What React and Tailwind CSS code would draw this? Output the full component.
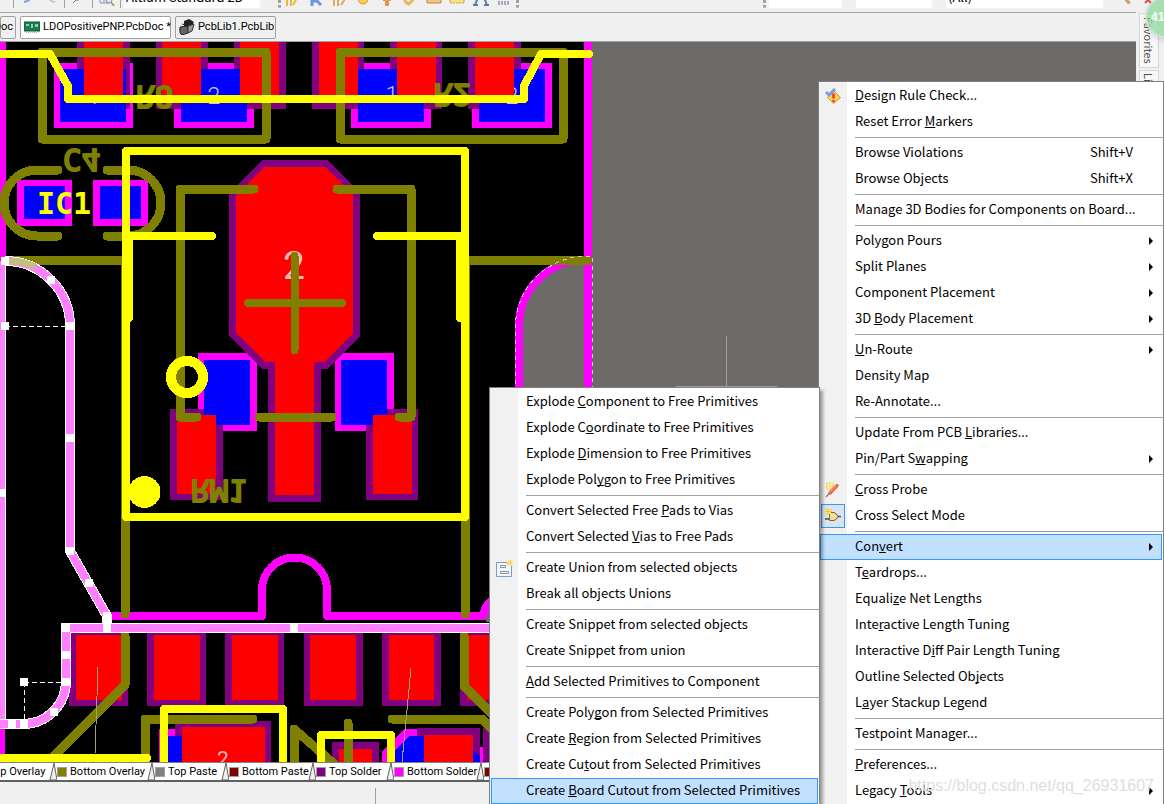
import { useState } from "react";

const mainMenu = [
  { label: "&Design Rule Check...", icon: "rule" },
  { label: "Reset Error &Markers" },
  null,
  { label: "Browse Violations", shortcut: "Shift+V" },
  { label: "Browse Objects", shortcut: "Shift+X" },
  null,
  { label: "Manage 3D Bodies for Components on Board..." },
  null,
  { label: "Polygon Pours", submenu: true },
  { label: "Split Planes", submenu: true },
  { label: "Component Placement", submenu: true },
  { label: "3D &Body Placement", submenu: true },
  null,
  { label: "&Un-Route", submenu: true },
  { label: "Density Map" },
  { label: "Re-Annotate..." },
  null,
  { label: "Update From PCB &Libraries..." },
  { label: "Pin/Part S&wapping", submenu: true },
  null,
  { label: "&Cross Probe", icon: "probe" },
  { label: "Cross Select Mode", icon: "select", checked: true },
  null,
  { label: "Con&vert", submenu: true },
  { label: "T&eardrops..." },
  { label: "Equali&ze Net Lengths" },
  { label: "Inte&ractive Length Tuning" },
  { label: "Interactive D&iff Pair Length Tuning" },
  { label: "Outline Selected Ob&jects" },
  { label: "L&ayer Stackup Legend" },
  null,
  { label: "Testpoint Manager..." },
  null,
  { label: "&Preferences..." },
  { label: "Legacy &Tools", submenu: true },
];

const convertMenu = [
  { label: "Explode &Component to Free Primitives" },
  { label: "Explode C&oordinate to Free Primitives" },
  { label: "Explode &Dimension to Free Primitives" },
  { label: "Explode Pol&ygon to Free Primitives" },
  null,
  { label: "Convert Selected Free &Pads to Vias" },
  { label: "Convert Selected &Vias to Free Pads" },
  null,
  { label: "Create Union from selected objects", icon: "union" },
  { label: "Break all objects Unions" },
  null,
  { label: "Create Snippet from selected objects" },
  { label: "Create Snippet from union" },
  null,
  { label: "&Add Selected Primitives to Component" },
  null,
  { label: "Create Poly&gon from Selected Primitives" },
  { label: "Create &Region from Selected Primitives" },
  { label: "Create Cu&tout from Selected Primitives" },
  { label: "Create &Board Cutout from Selected Primitives" },
];

const layers = [
  { name: "Top Overlay", color: "bg-[#ffff00]", width: "w-[82px]" },
  { name: "Bottom Overlay", color: "bg-[#808000]", width: "w-[98px]" },
  { name: "Top Paste", color: "bg-[#808080]", width: "w-[74px]" },
  { name: "Bottom Paste", color: "bg-[#800000]", width: "w-[87px]" },
  { name: "Top Solder", color: "bg-[#800080]", width: "w-[78px]" },
  { name: "Bottom Solder", color: "bg-[#ff00ff]", width: "w-[90px]" },
  { name: "Drill Guide", color: "bg-[#800000]", width: "w-[90px]" },
];

function MenuIcon({ name }) {
  if (name === "rule") {
    return (
      <svg className="h-4 w-4" viewBox="0 0 16 16">
        <path d="M8.500 2.500 15.500 9.500l-7 6-6-6z" fill="#fbd24a" stroke="#c89a3a" />
        <path d="M1 4l3 3 6-6" fill="none" stroke="#7f9be0" strokeWidth="3" />
        <path d="M8.500 5.500v5" stroke="#e03c28" strokeWidth="2.500" />
        <circle cx="8.500" cy="13" r="1.300" fill="#e03c28" />
      </svg>
    );
  }
  if (name === "probe") {
    return (
      <svg className="h-4 w-4" viewBox="0 0 16 16">
        <path d="M1.500 1h7v6h-7zM5 0v8M1 4h8" fill="#fdf0a0" stroke="#f3d56a" strokeDasharray="2 1" />
        <path d="M1 15l3.500-4" stroke="#888" strokeWidth="1.500" />
        <path d="M5 11l7-7.500" stroke="#ec6a48" strokeWidth="3.500" strokeLinecap="round" />
        <path d="M5.500 9.500l6-6.500" stroke="#fba98c" />
      </svg>
    );
  }
  if (name === "select") {
    return (
      <svg className="h-4 w-4" viewBox="0 0 16 16">
        <path d="M0 11h5M12 8.500h4" stroke="#4a4a3a" strokeWidth="1.500" />
        <path d="M4.500 4.500H9q3 1 4 4-1 3-4 4H4.500z" fill="#f7dc98" stroke="#7a6a3a" />
        <path d="M1 1h5v5H1z" fill="#ffe566" />
        <path d="M0 1h1M3 0v7M6 1h1M0 3.500h7M0 6h1" stroke="#f0c53a" />
      </svg>
    );
  }
  return (
    <svg className="h-[18px] w-[18px]" viewBox="0 0 18 18">
      <path d="M1.500 3.500h15v14h-15z" fill="#f2f6fc" stroke="#7d9bd0" />
      <path d="M5.500 6.500h5v2h-5zM5.500 12.500h8v2h-8z" fill="#fff" stroke="#8a8f9c" />
      <path d="M12 1h6v6h-6z" fill="#fbe9a8" />
      <path d="M15 1v6M12 4h6" stroke="#f0c53a" strokeDasharray="2 1" />
    </svg>
  );
}

function Mnemonic({ text }) {
  const at = text.indexOf("&");
  if (at < 0) return <span className="pb-0.5">{text}</span>;
  return (
    <span className="pb-0.5">
      {text.slice(0, at)}
      <u className="underline-offset-1 [text-decoration-skip-ink:none]">{text[at + 1]}</u>
      {text.slice(at + 2)}
    </span>
  );
}

function Menu({ items, active, onHover, className }) {
  return (
    <ul
      role="menu"
      className={`border border-[#808080] bg-white bg-linear-to-r from-[#f1f1f1] from-[28px] to-white to-[28px] pt-px text-[13px] leading-6 text-black ${className}`}
    >
      {items.map((item, i) =>
        item ? (
          <li key={item.label} role="none" className="px-px">
            <button
              role="menuitem"
              onMouseEnter={() => onHover(item.label)}
              className={`flex h-[26px] w-full items-center border whitespace-nowrap ${
                active === item.label ? "border-[#3399ff] bg-[#c2e0ff]" : "border-transparent"
              }`}
            >
              <span className="flex w-[34px] shrink-0">
                {item.icon && (
                  <span
                    className={`flex h-6 w-6 items-center justify-center border ${
                      item.checked ? "border-[#3399ff] bg-[#dae4ee]" : "border-transparent"
                    }`}
                  >
                    <MenuIcon name={item.icon} />
                  </span>
                )}
              </span>
              <Mnemonic text={item.label} />
              {item.shortcut && <span className="mr-7 ml-auto pb-0.5">{item.shortcut}</span>}
              {item.submenu && (
                <svg className="mr-2 ml-auto h-2 w-1" viewBox="0 0 4 8">
                  <path d="M0 0l4 4-4 4z" />
                </svg>
              )}
            </button>
          </li>
        ) : (
          <li key={i} role="separator" className="flex h-[5px] items-center pl-9">
            <span className="h-px w-full bg-[#a0a0a0]" />
          </li>
        )
      )}
    </ul>
  );
}

// x, y, right, bottom
function Box({ at, fill }) {
  return <rect x={at[0]} y={at[1]} width={at[2] - at[0]} height={at[3] - at[1]} fill={fill} />;
}

const solderTop = [
  [77, 42, 130, 109], [156, 42, 208, 109], [234, 42, 286, 109],
  [312, 42, 364, 109], [390, 42, 442, 109], [468, 42, 521, 109],
  [170, 409, 223, 500], [366, 409, 418, 500],
  [69, 632, 128, 706], [147, 632, 206, 706], [225, 632, 284, 706],
  [304, 632, 363, 706], [382, 632, 441, 706], [460, 632, 519, 706],
  [175, 721, 271, 762], [332, 742, 379, 762], [417, 728, 480, 762], [483, 728, 540, 762],
];

const copperTop = [
  [84, 42, 123, 102], [162, 42, 201, 102], [240, 42, 279, 102],
  [319, 42, 358, 102], [397, 42, 436, 102], [475, 42, 514, 102],
  [177, 415, 216, 494], [373, 415, 412, 494],
  [76, 635, 122, 700], [154, 635, 200, 700], [232, 635, 278, 700],
  [310, 635, 356, 700], [389, 635, 434, 700], [467, 635, 513, 700],
  [182, 727, 265, 762], [339, 749, 372, 762], [424, 735, 473, 762],
];

const solderBottom = [
  [54, 63, 133, 128], [174, 63, 254, 128], [351, 63, 431, 128], [472, 63, 552, 128],
  [17, 180, 72, 226], [93, 180, 148, 226],
  [198, 353, 257, 431], [335, 353, 394, 431],
  [159, 729, 180, 762], [478, 747, 483, 762],
];

const copperBottom = [
  [60, 69, 126, 122], [181, 69, 247, 122], [358, 69, 424, 122], [479, 69, 545, 122],
  [24, 186, 65, 219], [100, 186, 141, 219],
  [204, 360, 250, 425], [341, 360, 387, 425],
  [168, 736, 182, 762],
];

const handles = [
  [5, 261], [51, 280], [70, 326], [5, 326], [70, 438], [70, 551], [89, 583],
  [107, 616], [107, 622], [107, 628], [66, 628], [66, 655], [66, 682], [24, 682],
  [54, 712], [24, 724], [12, 724], [1, 493], [294, 628],
];

function Board() {
  return (
    <svg
      className="block h-full w-[1136px]"
      viewBox="0 42 1136 720"
      preserveAspectRatio="xMinYMin slice"
      shapeRendering="crispEdges"
      fill="none"
    >
      <path d="M0 42h588v720H0z" fill="#000" />
      <path d="M519 400v-74a66 66 0 0 1 66-66h3v140z" fill="#6e6a69" />

      {/* Board outline and bottom solder */}
      <g stroke="#f0f" strokeWidth="8" strokeLinecap="round" strokeLinejoin="round">
        <path d="M588 42v358M519 400v-74a66 66 0 0 1 66-66" />
        <path d="M2 42v220M1 720v42" />
        <path d="M107 616h155v-26a32.500 32.500 0 0 1 65 0v26h160" />
      </g>
      <path d="M478 620q1-15 14-26v26z" fill="#f0f" />
      <path d="M486 622v-6l6-4v10z" fill="#6e6a69" />
      {solderBottom.map((at, i) => <Box key={i} at={at} fill="#f0f" />)}
      <path d="M382 762v-10l22-23h14v33z" fill="#f0f" />

      {solderTop.map((at, i) => <Box key={i} at={at} fill="#800080" />)}
      <path d="M262 160h65l33 33v143l-33 33h-6v133h-53V369h-6l-33-33V193z" fill="#800080" />

      {copperBottom.map((at, i) => <Box key={i} at={at} fill="#00f" />)}
      <path d="M395 762v-12l15-14h15v26zM473 762v-12l7 7v5z" fill="#00f" />
      <g fontFamily="Roboto, sans-serif" fontWeight="300" textAnchor="middle" fill="#c8c8ff">
        <text x="94" y="104" fontSize="23">1</text>
        <text x="214" y="104" fontSize="23">2</text>
        <text x="392" y="103" fontSize="23">1</text>
        <text x="512" y="104" fontSize="23">2</text>
      </g>

      {copperTop.map((at, i) => <Box key={i} at={at} fill="#f00" />)}
      <path d="M265 167h60l28 28v138l-29 29h-10v133h-39V362h-10l-29-29V195z" fill="#f00" />
      <g fontFamily="Roboto, sans-serif" textAnchor="middle" fill="#ffb8b8">
        <text x="294" y="279" fontSize="39">2</text>
        <text x="223" y="766" fontSize="21">2</text>
      </g>

      {/* Bottom overlay */}
      <g stroke="#808000" strokeWidth="9" strokeLinecap="round" strokeLinejoin="round">
        <path d="M42 52h224v87H42zM340 52h223v87H340z" />
        <path d="M58 170H37a33 33 0 0 0 0 66h21M107 170h21a33 33 0 0 1 0 66h-21" />
        <path d="M5 260.500h120V614M588 260.500H465V614" />
        <path d="M254 189h-74v228h17M337 189h74v228h-12M259 417h73" />
        <path d="M125 636v49l-75 75M464 636v50l30 30M392 719h90l14 14" />
        <path d="M145 765v-46h108M294 765v-36l46 40M348 723v45" />
      </g>
      <path d="M294.500 256v94M248 303h94" stroke="#808000" strokeWidth="8" strokeLinecap="round" />
      <g
        fill="#808000"
        stroke="#808000"
        strokeWidth="2"
        strokeLinejoin="round"
        fontFamily="'DejaVu Sans Mono', monospace"
        fontSize="31"
      >
        <text transform="matrix(1 0 0 -1 136 86)">R8</text>
        <text transform="matrix(1 0 0 -1 434 84)">R2</text>
        <text transform="matrix(1 0 0 -1 63 149)">C4</text>
        <text transform="matrix(1 0 0 -1 191 480)">RM1</text>
      </g>

      {/* Top overlay */}
      <g stroke="#ff0" strokeWidth="8" strokeLinecap="round" strokeLinejoin="round">
        <path d="M0 54h50l18 32v13h456V86l17-32h48" />
        <path d="M126 151h339v366H126z" />
        <path d="M212 236h-83v82M377 236h83v82" />
        <path d="M0 758h147M164 766v-57h119v57M321 766v-31h70v31" />
        <circle cx="187" cy="377" r="16" strokeWidth="10" />
      </g>
      <circle cx="144.500" cy="492" r="16" fill="#ff0" />
      <text
        x="37"
        y="214"
        fill="#ff0"
        fontFamily="'DejaVu Sans Mono', monospace"
        fontWeight="700"
        fontSize="30"
      >
        IC1
      </text>

      {/* Selected outline with its grips */}
      <path d="M0 261h5v464H0z" fill="#ff80ff" />
      <path d="M5.500 261v464" stroke="#fff" />
      {[
        { stroke: "#fff", width: 10 },
        { stroke: "#ff80ff", width: 8 },
      ].map((pass) => (
        <path
          key={pass.width}
          d="M5 261a65 65 0 0 1 65 65v225l37 65v12M495 628H66v53a43 43 0 0 1-43 43H0"
          stroke={pass.stroke}
          strokeWidth={pass.width}
        />
      ))}
      <path d="M9 261q15 0 26 6" stroke="#c0c080" strokeWidth="7" />
      <path d="M5 326h65M24 682h42M24 682v42" stroke="#fff" strokeDasharray="5 3" />
      {handles.map(([x, y]) => (
        <rect key={`${x}-${y}`} x={x - 4} y={y - 4} width="8" height="8" fill="#fff" />
      ))}

      <path d="M515.500 400v-74a72 70 0 0 1 72-70h5v144" stroke="#ccc" strokeDasharray="4 4" />
      <path d="M98 667l-3 87M411 668l-9 94" stroke="#a0a080" />
      <path d="M726.500 336v51M676 386.500h101" stroke="#a0a0a0" />
    </svg>
  );
}

function Divider() {
  return <span className="h-2 w-px shrink-0 bg-[#a0a0a0]" />;
}

function Grip() {
  return <span className="h-2 w-[3px] shrink-0 border-l-3 border-dotted border-[#a0a0a0]" />;
}

function Combo({ label, value, width }) {
  return (
    <span className={`flex h-[22px] shrink-0 bg-white ${width}`}>
      <select aria-label={label} className="min-w-0 flex-1 appearance-none pl-0.5 text-[13px] leading-[20px] text-black">
        <option>{value}</option>
      </select>
      <span className="w-[11px] bg-[#f0f0f0]" />
    </span>
  );
}

const tools = [
  { name: "Route", art: <path d="M2 0v16M6 0v16M14 4L8 15" stroke="#f0b840" strokeWidth="2" /> },
  { name: "Route differential pair", art: <path d="M4 4v12M4 11h5l4 4" stroke="#6d94e0" strokeWidth="3" /> },
  { name: "Route multiple", art: <path d="M2 0v16M6 0v16M15 6l-6 9" stroke="#e0a860" strokeWidth="2" /> },
  { name: "Place pad", art: <circle cx="8" cy="9" r="5" fill="#f8cf50" stroke="#d09a30" /> },
  { name: "Place via", art: <path d="M8 4v12M4 9h8" stroke="#e09a48" strokeWidth="4" /> },
  { name: "Place arc", art: <path d="M2 4q0 9 5 10l8-9" stroke="#e8b860" strokeWidth="3" /> },
  { name: "Place fill", art: <path d="M1 3h14v10H1z" fill="#f3c680" stroke="#c08850" /> },
  { name: "Place polygon", art: <path d="M1 3h14v10H1z" fill="#fbe080" stroke="#c0a050" strokeDasharray="2 1" /> },
  { name: "Place string", art: <path d="M2 15L8 0l6 15M0 15h5M11 15h5M4 9h8" stroke="#6077a8" strokeWidth="2" /> },
  { name: "Place component", art: <path d="M1 9h14M3 11v4M6 11v4M9 11v4M12 11v4" stroke="#606880" strokeWidth="1" /> },
];

function Toolbar() {
  return (
    <div className="flex h-[13px] shrink-0 items-end overflow-hidden border-b border-[#a0a0a0] bg-[#f0f0f0] pb-1">
      <span className="w-[13px] shrink-0" />
      <Divider />
      <span className="flex w-[50px] shrink-0 justify-around pb-1">
        <svg className="h-4 w-3" viewBox="0 0 12 16" fill="none">
          <path d="M3 14q8-1 7-9" stroke="#7f9fe0" strokeWidth="2" />
        </svg>
        <svg className="h-4 w-3" viewBox="0 0 12 16" fill="none">
          <path d="M9 14q-8-1-7-9" stroke="#c4c8d0" strokeWidth="2" />
        </svg>
      </span>
      <Divider />
      <span className="flex w-[27px] shrink-0 justify-center pb-1">
        <svg className="h-4 w-3" viewBox="0 0 12 16">
          <path d="M0 15l3-3" stroke="#777" />
          <path d="M3 12l8-9" stroke="#e8603c" strokeWidth="4" />
        </svg>
      </span>
      <Divider />
      <span className="flex w-[27px] shrink-0 justify-center pb-0.5">
        <svg className="h-4 w-4" viewBox="0 0 16 16" fill="none">
          <path d="M1 3h9v10H1zM1 8h9M5 3v10" stroke="#8a90b0" />
          <circle cx="10" cy="10" r="3" fill="#d8e8fa" stroke="#6a88c0" />
          <path d="M12 12l3 4" stroke="#c89850" strokeWidth="2" />
        </svg>
      </span>
      <Divider />
      <span className="w-[3px] shrink-0" />
      <Combo label="View configuration" value="Altium Standard 2D" width="w-[147px]" />
      <span className="w-[7px] shrink-0" />
      <Grip />
      <span className="flex w-[235px] shrink-0 justify-between px-1 pb-0.5">
        {tools.map((tool) => (
          <button key={tool.name} aria-label={tool.name}>
            <svg className="h-4 w-4" viewBox="0 0 16 16" fill="none">{tool.art}</svg>
          </button>
        ))}
      </span>
      <Grip />
      <span className="ml-auto flex shrink-0 items-end gap-[3px]">
        <Grip />
        <Combo label="Net" value="" width="w-[84px]" />
        <Combo label="Component" value="" width="w-[87px]" />
        <Combo label="Filter" value="(All)" width="w-[168px]" />
        <svg className="h-4 w-[19px] pb-1" viewBox="0 0 19 16" fill="none">
          <path d="M2 9l6-5M8 9l5 6" stroke="#a0a8b8" strokeWidth="4" />
          <path d="M10 12l4 3" stroke="#d8a050" strokeWidth="3" />
        </svg>
      </span>
    </div>
  );
}

const docTab =
  "flex h-[23px] shrink-0 items-center rounded-xs border border-[#a0a0a0] text-[11px] whitespace-nowrap text-black";

function DocumentTabs() {
  return (
    <div className="flex h-[29px] shrink-0 items-center gap-1 overflow-hidden border-b border-[#a0a0a0] bg-[#f0f0f0] font-['Roboto',sans-serif]">
      <button className={`${docTab} w-4 justify-end bg-[#f0f0f0] pr-0.5`}>Doc</button>
      <button className={`${docTab} w-[151px] gap-[3px] bg-white pl-[3px]`}>
        <svg className="h-4 w-4 shrink-0" viewBox="0 0 16 16">
          <path d="M0 3h16v9H0z" fill="#1e7a50" stroke="#145038" />
          <path d="M2 5h3v2H2zM7 5h2v4H7zM11 5h3v3h-3z" fill="#7fd6a0" />
          <path d="M2 13.500h12" stroke="#e0b050" strokeDasharray="1 1" />
        </svg>
        LDOPositivePNP.PcbDoc *
      </button>
      <button className={`${docTab} w-[101px] gap-[3px] bg-[#f0f0f0] pl-[3px]`}>
        <svg className="h-4 w-4 shrink-0" viewBox="0 0 16 16">
          <path d="M5 2l5-2 5 3-3 5-7-1z" fill="#222" />
          <path d="M1 8l8-1v7l-6 2-2-2z" fill="#666" stroke="#222" />
          <path d="M9 7l6-2-2 7-4 2zM1 10l-1 1M3 5l3 1" fill="#999" stroke="#333" />
        </svg>
        PcbLib1.PcbLib
      </button>
    </div>
  );
}

function LayerTabs() {
  return (
    <div className="flex h-5 shrink-0 overflow-hidden border-t border-b-2 border-t-[#808080] border-b-[#606060] bg-white font-['Roboto',sans-serif] text-[11px] text-black">
      <div className="-ml-[33px] flex">
        {layers.map((layer) => (
          <button key={layer.name} className={`flex shrink-0 items-center whitespace-nowrap ${layer.width}`}>
            <svg className="h-full w-2 shrink-0" viewBox="0 0 8 17" fill="none">
              <path d="M1 17L5 0l3 17z" fill="#f0f0f0" stroke="#606060" />
            </svg>
            <span className={`mr-[3px] h-[10px] w-[10px] shrink-0 border border-[#a0a0a0] ${layer.color}`} />
            <span className="pt-0.5">{layer.name}</span>
          </button>
        ))}
      </div>
    </div>
  );
}

function SidePanel() {
  return (
    <aside className="relative flex w-7 shrink-0 flex-col gap-[2px] overflow-hidden bg-[#f0f0f0] pl-[3px] text-[11px] text-[#505050]">
      <svg className="h-[11px] w-4 shrink-0" viewBox="0 0 16 11" fill="none">
        <path d="M6 3l3-3 4 4" stroke="#e05040" strokeWidth="2" />
      </svg>
      <button className="flex h-[55px] w-5 items-center justify-center border border-[#d8d8d8] bg-[#f7f7f7] [writing-mode:vertical-rl]">
        Favorites
      </button>
      <button className="flex h-16 w-5 items-center border border-[#d8d8d8] bg-[#f7f7f7] pt-0.5 [writing-mode:vertical-rl]">
        Libraries
      </button>
      <span className="absolute -top-1 left-[9px] flex h-[42px] w-[42px] items-center rounded-full border-2 border-[#ddd]/80 bg-[#86d896]/70 pl-1 font-['Liberation_Sans',sans-serif] text-[12px] font-bold text-white shadow-md">
        41
      </span>
    </aside>
  );
}

export default function App() {
  const [active, setActive] = useState("Con&vert");
  const [activeConvert, setActiveConvert] = useState("Create &Board Cutout from Selected Primitives");

  return (
    <div className="relative flex h-screen w-full overflow-hidden bg-[#f0f0f0] font-['Noto_Sans_CJK_SC',sans-serif]">
      <div className="flex min-w-0 flex-1 flex-col">
        <Toolbar />
        <DocumentTabs />
        <main className="min-h-0 flex-1 overflow-hidden bg-[#6e6a69]">
          <Board />
        </main>
        <LayerTabs />
        <footer className="flex h-[22px] shrink-0 items-end bg-[#f0f0f0]">
          <span className="h-4 w-[376px] border-r border-[#a0a0a0]" />
        </footer>
      </div>
      <SidePanel />

      <Menu
        items={mainMenu}
        active={active}
        onHover={setActive}
        className="absolute top-[81px] right-0 w-[346px]"
      />
      <Menu
        items={convertMenu}
        active={activeConvert}
        onHover={setActiveConvert}
        className="absolute top-[387px] right-[344px] w-[331px] shadow-[3px_3px_3px_rgba(0,0,0,0.35)]"
      />

      <p className="pointer-events-none absolute right-[10px] bottom-[8px] font-['Liberation_Sans',sans-serif] text-[16px] leading-5 text-[#dedede]">
        https://blog.csdn.net/qq_26931607
      </p>
    </div>
  );
}
